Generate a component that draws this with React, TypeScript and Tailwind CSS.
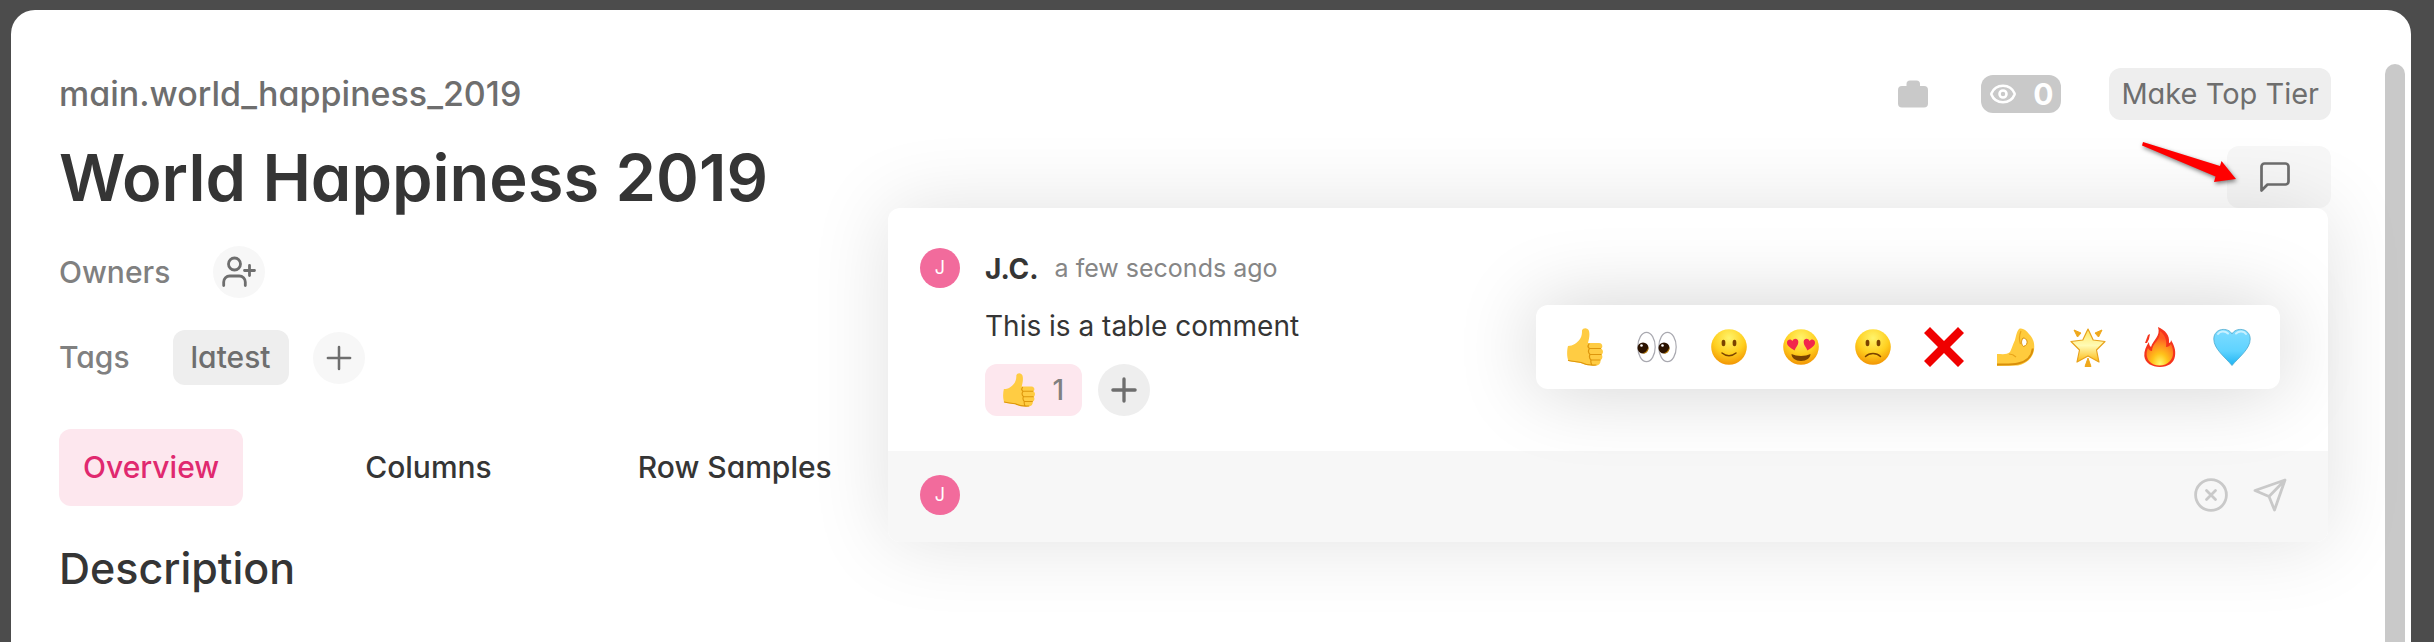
import React, { ReactNode } from "react";
import { Plus, Eye } from "lucide-react";

function Thumb({ className }: { className: string }) {
  return (
    <svg viewBox="0 0 36 38" className={className} aria-hidden="true">
      <path d="M1 18C6 18 10 15 13 11c2-3 2-6 2-8.500C16-.8 21-.5 22 3c1 4 0 8-1 12h11c4 0 4 5 2 5.500 3 1.500 2 5.500.5 6 1.500 1.500 1 4.500-1 5.500.5 3-1.500 5.500-4.500 5.500-5 .5-12-.5-15-2.500-5-1-9-1-12.500-2C-.5 28 0 22 1 18z" fill="#ffcc43" />
      <path d="M1.500 32.500c4 1 8 1 12.500 2 4 2 10 3 15 2.500M23 20.500h10.500M23.500 26.500H34M24 32h9M22 16c-1.500 2-1.500 3 .5 4.500-1.500 2-1 4.500.5 6-1 2-.5 4 1 5.500-.5 2 0 3.500 1 5" fill="none" stroke="#dd960c" strokeWidth="1.200" strokeLinecap="round" />
    </svg>
  );
}

function Face({ children }: { children: ReactNode }) {
  return (
    <svg viewBox="0 0 36 36" className="size-9" aria-hidden="true">
      <defs>
        <radialGradient id="face" cx=".5" cy=".25" r=".8">
          <stop offset="0" stopColor="#fff46b" />
          <stop offset=".55" stopColor="#ffcf1f" />
          <stop offset="1" stopColor="#f08c00" />
        </radialGradient>
      </defs>
      <circle cx="18" cy="18" r="17.800" fill="url(#face)" />
      {children}
    </svg>
  );
}

const dotEyes = (
  <>
    <ellipse cx="12.500" cy="14" rx="1.900" ry="3.200" fill="#7a4300" />
    <ellipse cx="23.500" cy="14" rx="1.900" ry="3.200" fill="#7a4300" />
  </>
);

const reactions: { name: string; art: ReactNode }[] = [
  { name: "Thumbs up", art: <Thumb className="h-[38px] w-9" /> },
  {
    name: "Eyes",
    art: (
      <svg viewBox="0 0 40 32" className="h-8 w-10" aria-hidden="true">
        {[0, 21].map((x) => (
          <g key={x} transform={`translate(${x} 0)`}>
            <ellipse cx="9.500" cy="16" rx="8.700" ry="14.700" fill="#fff" stroke="#a9a9b0" strokeWidth="1.200" />
            <circle cx="6" cy="17" r="5.500" fill="#2b1200" />
            <path d="M5 22.400a5.500 5.500 0 0 0 6.200-7c0 3-2.200 6-6.200 7z" fill="#c98600" />
            <circle cx="4.500" cy="14.500" r="1.300" fill="#fff" />
          </g>
        ))}
      </svg>
    ),
  },
  {
    name: "Smile",
    art: (
      <Face>
        {dotEyes}
        <path d="M11 24c4 3.500 10 3.500 14 0" fill="none" stroke="#7a4300" strokeWidth="1.500" strokeLinecap="round" />
      </Face>
    ),
  },
  {
    name: "Heart eyes",
    art: (
      <Face>
        <path d="M8.500 25c5 2.500 14 2.500 19 0 0 4-4 7-9.500 7s-9.500-3-9.500-7z" fill="#7a4300" />
        <path d="M11.500 21.500C8 19 3.500 17 4 13c.5-3 4-3.500 5.500-1C10.500 9 15 9 15.300 12.500c.2 3.500-2.300 5.500-3.800 9z" fill="#f2274c" />
        <path d="M24.500 21.500c3.500-2.500 8-4.500 7.500-8.500-.5-3-4-3.500-5.500-1-1-3-5.500-3-5.800.5-.2 3.500 2.300 5.500 3.800 9z" fill="#f2274c" />
      </Face>
    ),
  },
  {
    name: "Frown",
    art: (
      <Face>
        {dotEyes}
        <path d="M10.500 27.500c4-4 11-4 15 0" fill="none" stroke="#7a4300" strokeWidth="1.500" strokeLinecap="round" />
      </Face>
    ),
  },
  {
    name: "Cross",
    art: (
      <svg viewBox="0 0 40 40" className="size-10" aria-hidden="true">
        <path d="M6 0l14 14L34 0l6 6-14 14 14 14-6 6-14-14L6 40l-6-6 14-14L0 6z" fill="#f00000" />
      </svg>
    ),
  },
  {
    name: "Pinched fingers",
    art: (
      <svg viewBox="0 0 38 38" className="size-[38px]" aria-hidden="true">
        <path d="M0 26c5 0 10 1 13-2 2-4 3-8 5-12 1-4 2-9 4-11 3-1.500 7 1 10 5 4 4 6 9 5 16-1 8-8 14-16 15.500L0 38z" fill="#ffcb3d" />
        <path d="M0 36.500c8 0 15 .5 21-1 9-2 14-8 14.800-15" fill="none" stroke="#d98f0a" strokeWidth="2" />
        <path d="M26 10c-2 3-2 6 .5 8.500 3-1 4-3 3.500-5.500-.3-1.500-2-3-4-3z" fill="#fff" stroke="#d98f0a" />
        <path d="M24 3c-2 5-2 9-.5 13M12 26c3 0 5 1 7 3" fill="none" stroke="#e9a51b" strokeWidth="1.200" />
      </svg>
    ),
  },
  {
    name: "Glowing star",
    art: (
      <svg viewBox="0 0 36 40" className="h-10 w-9" aria-hidden="true">
        <defs>
          <linearGradient id="star" x2="0" y2="1">
            <stop offset="0" stopColor="#ffe45c" />
            <stop offset=".5" stopColor="#fffbb5" />
            <stop offset="1" stopColor="#fdb913" />
          </linearGradient>
        </defs>
        <path d="M18 2l5.200 11 11.800 1.500-8.500 8.500 2.500 12-11-6-11 6 2.500-12L1 14.500 12.800 13z" fill="url(#star)" stroke="#e8a21c" strokeWidth="1.200" strokeLinejoin="round" />
        <path d="M4 3l7 3-3.500 4zM32 3l-7 3 3.500 4zM18 31l3 8.500h-6z" fill="#efa81c" stroke="#efa81c" strokeLinejoin="round" />
      </svg>
    ),
  },
  {
    name: "Fire",
    art: (
      <svg viewBox="0 0 32 40" className="h-10 w-8" aria-hidden="true">
        <defs>
          <radialGradient id="fire" cx=".5" cy=".95" r=".75">
            <stop offset="0" stopColor="#fff86b" />
            <stop offset=".4" stopColor="#ffc21a" />
            <stop offset=".75" stopColor="#ff8a1f" />
            <stop offset="1" stopColor="#ff5a22" />
          </radialGradient>
        </defs>
        <path d="M14 0c7 3 12 8 11 16 1 0 2-1 2-3 3 5 5 10 4 16-1 7-7 11-15 11S1 36 .3 29C0 24 2 19 5 15c0 2 .5 4 2 5C9 13 17 9 14 0z" fill="#f5341c" />
        <path d="M16 4c5 4 7 9 6 16 2 0 4-1 5-3 3 6 3 13-1 17-5 6-16 6-21 0-3-4-3-9-1-13 1 2 2 3 4 3 0-8 9-11 8-20z" fill="url(#fire)" />
        <path d="M4 8l2-1-1 5-2 4-2 0z" fill="#f5341c" />
      </svg>
    ),
  },
  {
    name: "Light blue heart",
    art: (
      <svg viewBox="0 0 38 38" className="size-[38px]" aria-hidden="true">
        <defs>
          <linearGradient id="heart" x2="0" y2="1">
            <stop offset="0" stopColor="#7fdcff" />
            <stop offset=".6" stopColor="#5fd3ff" />
            <stop offset="1" stopColor="#1fb4f3" />
          </linearGradient>
        </defs>
        <path d="M19 6C15.500-1 1-.5 .8 11 .8 21 12 29 19 37.500 26 29 37.200 21 37.200 11 37-.5 22.500-1 19 6z" fill="url(#heart)" stroke="#4aa9cf" strokeWidth=".8" />
        <path d="M5 6c2-3 7-3.500 10-.5M23 5.500c3-3 8-2.500 10 .5" fill="none" stroke="#c9f1ff" strokeWidth="2" strokeLinecap="round" />
      </svg>
    ),
  },
];

function Avatar() {
  return (
    <span className="flex size-10 shrink-0 items-center justify-center rounded-full bg-[#f26b9c] text-lg text-white">J</span>
  );
}

const geo = "[font-feature-settings:'cv11']";

export default function App() {
  return (
    <div className="h-screen overflow-hidden bg-[#4c4c4c] pt-[10px] pr-[23px] pl-[11px] font-['Inter',sans-serif] text-[#353535]">
      <main className={`flex h-full justify-between rounded-t-3xl bg-white pt-[54px] pr-[6px] pl-12 ${geo}`}>
        <div className="relative min-w-0 flex-1">
          <header className="flex items-center justify-between pt-1">
            <span className="text-[34px] leading-[52px] font-medium text-[#6e6e6e]">main.world_happiness_2019</span>
            <div className="flex items-center gap-12">
              <svg viewBox="0 0 30 28" className="mr-[5px] h-7 w-[30px]" role="img" aria-label="Briefcase">
                <path d="M8.500 6V4a3.500 3.500 0 0 1 3.500-3.500h6.500A3.500 3.500 0 0 1 22 4v2h4a4 4 0 0 1 4 4v13.500a4 4 0 0 1-4 4H4a4 4 0 0 1-4-4V10a4 4 0 0 1 4-4z" fill="#c9c9c9" />
              </svg>
              <span className="flex h-[38px] w-20 items-center justify-between rounded-xl bg-[#c9c9c9] px-2 text-[30px] font-bold text-white">
                <Eye className="size-7" strokeWidth={2.2} />
                0
              </span>
              <button className="h-[52px] rounded-xl bg-[#eeeeee] px-3 text-[29px] text-[#6e6e6e]">Make Top Tier</button>
            </div>
          </header>

          <div className="mt-[26px] flex items-start justify-between">
            <h1 className="text-[65px] leading-[64px] font-semibold">World Happiness 2019</h1>
            <button aria-label="Comments" className="flex h-[62px] w-[104px] items-center justify-center rounded-xl bg-[#f7f7f7] pr-2 text-[#6e6e6e]">
              <svg viewBox="0 0 24 24" className="size-9" fill="none" stroke="currentColor" strokeWidth="1.800" strokeLinecap="round" strokeLinejoin="round">
                <path d="M21 15a2 2 0 0 1-2 2H7l-4 4V5a2 2 0 0 1 2-2h14a2 2 0 0 1 2 2z" />
              </svg>
            </button>
          </div>

          <div className="mt-9 flex items-center gap-[43px] text-[30px] leading-[52px] font-medium text-[#808080]">
            Owners
            <button aria-label="Add owner" className="flex size-[52px] items-center justify-center rounded-full bg-[#f7f7f7] text-[#6e6e6e]">
              <svg viewBox="0 0 34 32" className="h-8 w-[34px]" fill="none" stroke="currentColor" strokeWidth="2.800" strokeLinecap="round">
                <circle cx="12.500" cy="8" r="6" />
                <path d="M1.700 29.500V26a6 6 0 0 1 6-6h9.600a6 6 0 0 1 6 6v3.500M27.500 9.500v10M22.500 14.500h10" />
              </svg>
            </button>
          </div>

          <div className="mt-8 flex h-[55px] items-center text-[30px] font-medium text-[#808080]">
            Tags
            <span className="ml-[43px] rounded-xl bg-[#eeeeee] px-[18px] leading-[55px] text-[#6e6e6e]">latest</span>
            <button aria-label="Add tag" className="ml-6 flex size-[52px] items-center justify-center rounded-full bg-[#f7f7f7] text-[#6e6e6e]">
              <Plus className="size-[38px]" strokeWidth={1.6} />
            </button>
          </div>

          <nav className="mt-11 flex gap-[98px] text-[30px] leading-[77px] font-medium">
            <button className="rounded-xl bg-[#fde7ee] px-6 text-[#e0296f]">Overview</button>
            <button className="px-6">Columns</button>
            <button className="px-6">Row Samples</button>
          </nav>

          <h2 className="mt-[38px] text-[43px] leading-[48px] font-medium">Description</h2>

          <section className="absolute top-[144px] right-[3px] left-[829px] rounded-[12px] bg-white shadow-[0_0_80px_rgba(0,0,0,0.12)] [font-feature-settings:normal]">
            <article className="flex h-[243px] items-start gap-[25px] px-8 pt-10">
              <Avatar />
              <div>
                <div className="flex h-10 items-center gap-4 pt-[2px]">
                  <strong className="text-[28px] font-bold">J.C.</strong>
                  <time className="text-[25px] text-[#868686]">a few seconds ago</time>
                </div>
                <p className="mt-[18px] text-[28px] leading-10">This is a table comment</p>
                <div className="mt-[18px] flex items-center gap-4">
                  <button className="flex h-[52px] w-[97px] items-center justify-between rounded-xl bg-[#fde7ee] px-[18px] text-[28px] font-medium text-[#808080]">
                    <Thumb className="h-[34px] w-8" />1
                  </button>
                  <button aria-label="Add reaction" className="flex size-[52px] items-center justify-center rounded-full bg-[#eeeeee] text-[#6e6e6e]">
                    <Plus className="size-[38px]" strokeWidth={2.1} />
                  </button>
                </div>
              </div>
            </article>
            <form className="flex h-[91px] items-center gap-[25px] rounded-b-[12px] bg-[#f7f7f7] pr-[41px] pb-1 pl-8">
              <Avatar />
              <input aria-label="Write a comment" className="min-w-0 flex-1 bg-transparent text-[28px] outline-none" />
              <button type="button" aria-label="Cancel" className="text-[#c9c9c9]">
                <svg viewBox="0 0 34 34" className="size-[34px]" fill="none" stroke="currentColor" strokeWidth="2.800" strokeLinecap="round">
                  <circle cx="17" cy="17" r="15.400" />
                  <path d="M12.500 12.500l9 9M21.500 12.500l-9 9" />
                </svg>
              </button>
              <button type="button" aria-label="Send" className="text-[#c9c9c9]">
                <svg viewBox="0 0 34 34" className="size-[34px]" fill="none" stroke="currentColor" strokeWidth="2.800" strokeLinejoin="round">
                  <path d="M32 2L2 12.500l14 6L21.500 32zM32 2L16 18.500" />
                </svg>
              </button>
            </form>

            <div className="absolute top-[97px] right-12 flex h-[84px] w-[744px] items-center rounded-[12px] bg-white pr-3 pl-[13px] shadow-[0_0_80px_rgba(0,0,0,0.18)]">
              {reactions.map((r) => (
                <button key={r.name} aria-label={r.name} className="flex h-full flex-1 items-center justify-center">
                  {r.art}
                </button>
              ))}
            </div>
          </section>

          <svg viewBox="0 0 100 50" className="absolute top-[76px] right-[92px] h-[50px] w-[100px] drop-shadow-[1px_2px_2px_rgba(0,0,0,0.5)]" aria-hidden="true">
            <path d="M4 2L81 26 82.500 21 97 39 75 42 76.500 36.500 3 5.500z" fill="#f00" />
          </svg>
        </div>
        <div className="ml-[54px] w-5 rounded-t-full bg-[#c9c9c9]" />
      </main>
    </div>
  );
}
